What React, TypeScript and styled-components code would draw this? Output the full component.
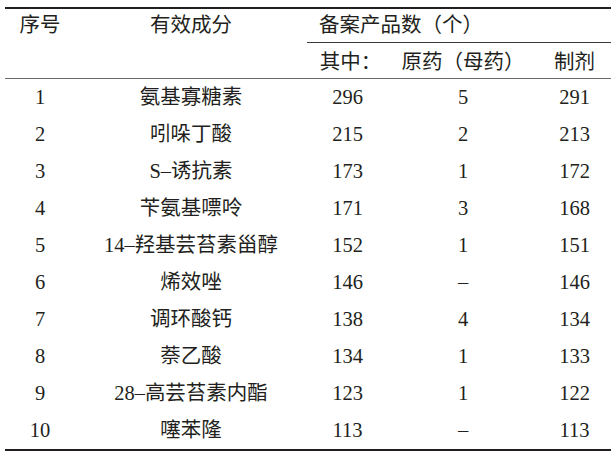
import React from "react";
import styled, { createGlobalStyle } from "styled-components";

const GlobalStyle = createGlobalStyle`
  html, body {
    margin: 0;
    padding: 0;
    background: #ffffff;
  }
  body {
    font-family: "Liberation Serif", "Noto Sans CJK SC", serif;
    color: #231f20;
  }
`;

const COLS = "70px 232px 81px 150px 73px";

const Sheet = styled.div`
  width: 606px;
  margin: 7px 0 0 5px;
  border-top: 2px solid #231f20;
  border-bottom: 2px solid #231f20;
  font-family: "Liberation Serif", "Noto Sans CJK SC", serif;
  font-size: 20.5px;
  color: #231f20;
`;

const HeadTop = styled.div`
  display: grid;
  grid-template-columns: ${COLS};
  height: 33px;
  align-items: center;
`;

const HeadBottom = styled.div`
  display: grid;
  grid-template-columns: ${COLS};
  height: 36px;
  border-bottom: 1px solid #6a6a6a;
`;

const HeadCell = styled.div<{ $span?: string; $left?: boolean; $indent?: number }>`
  grid-column: ${(p) => p.$span || "auto"};
  text-align: ${(p) => (p.$left ? "left" : "center")};
  padding-left: ${(p) => p.$indent || 0}px;
  white-space: nowrap;
  line-height: 1;
`;

const SubCell = styled.div<{ $rule?: boolean; $shift?: number }>`
  box-sizing: border-box;
  border-top: ${(p) => (p.$rule ? "1px solid #3a3a3a" : "1px solid transparent")};
  display: flex;
  align-items: center;
  justify-content: center;
  padding-top: 3px;
  padding-left: ${(p) => p.$shift || 0}px;
  white-space: nowrap;
  line-height: 1;
`;

const Row = styled.div`
  display: grid;
  grid-template-columns: ${COLS};
  height: 37px;
  align-items: center;
`;

const Cell = styled.div`
  text-align: center;
  white-space: nowrap;
  line-height: 1;
`;

type Item = [string, string, string, string, string];

const rows: Item[] = [
  ["1", "氨基寡糖素", "296", "5", "291"],
  ["2", "吲哚丁酸", "215", "2", "213"],
  ["3", "S–诱抗素", "173", "1", "172"],
  ["4", "苄氨基嘌呤", "171", "3", "168"],
  ["5", "14–羟基芸苔素甾醇", "152", "1", "151"],
  ["6", "烯效唑", "146", "–", "146"],
  ["7", "调环酸钙", "138", "4", "134"],
  ["8", "萘乙酸", "134", "1", "133"],
  ["9", "28–高芸苔素内酯", "123", "1", "122"],
  ["10", "噻苯隆", "113", "–", "113"],
];

export default function App() {
  return (
    <>
      <GlobalStyle />
      <Sheet>
        <HeadTop>
          <HeadCell>序号</HeadCell>
          <HeadCell>有效成分</HeadCell>
          <HeadCell $span="3 / 6" $left $indent={12}>
            备案产品数（个）
          </HeadCell>
        </HeadTop>
        <HeadBottom>
          <SubCell />
          <SubCell />
          <SubCell $rule $shift={6}>其中：</SubCell>
          <SubCell $rule>原药（母药）</SubCell>
          <SubCell $rule>制剂</SubCell>
        </HeadBottom>
        {rows.map((r) => (
          <Row key={r[0]}>
            {r.map((v, i) => (
              <Cell key={i}>{v}</Cell>
            ))}
          </Row>
        ))}
      </Sheet>
    </>
  );
}
